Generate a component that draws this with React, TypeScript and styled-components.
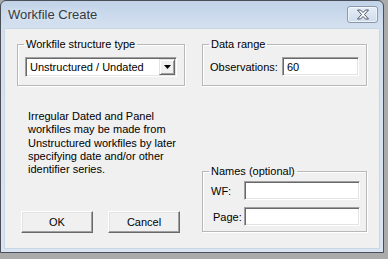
import React from 'react';
import styled, { createGlobalStyle } from 'styled-components';

const GlobalStyle = createGlobalStyle`
  html, body {
    margin: 0;
    padding: 0;
    background: #ababab;
    width: 388px;
    height: 259px;
    overflow: hidden;
  }
`;

const Window = styled.div`
  width: 382px;
  height: 251px;
  border: 1px solid #4a4f57;
  border-radius: 6px 6px 0 0;
  background: linear-gradient(to bottom, #c1d3e8 0px, #d3e0ef 26px, #d9e5f2 100%);
  display: flex;
  flex-direction: column;
  font-family: 'Liberation Sans', Arial, sans-serif;
  font-size: 11px;
  color: #000;
`;

const TitleBar = styled.div`
  height: 27px;
  display: flex;
  align-items: center;
  justify-content: space-between;
  padding: 0 5px 0 7px;
`;

const Title = styled.span`
  font-family: 'Liberation Sans', Arial, sans-serif;
  font-size: 13px;
  color: #333b45;
  text-shadow: 0 0 6px rgba(255, 255, 255, 0.9);
`;

const CloseButton = styled.div`
  width: 29px;
  height: 15px;
  border: 1px solid #8a98ab;
  border-radius: 3px;
  background: linear-gradient(to bottom, #e6edf6, #cfdcec);
  box-shadow: inset 0 0 0 1px rgba(255, 255, 255, 0.6);
  display: flex;
  align-items: center;
  justify-content: center;
`;

const Client = styled.div`
  flex: 1;
  margin: 0 3px 3px 3px;
  background: #f0f0f0;
  border: 1px solid #c9d6e6;
  display: grid;
  grid-template-columns: 168px 165px;
  column-gap: 17px;
  align-items: start;
  padding: 9px 0 0 12px;
`;

const Column = styled.div`
  display: flex;
  flex-direction: column;
`;

const Group = styled.fieldset<{ $height: number; $top?: number; $pad: number }>`
  margin: ${p => p.$top ?? 0}px 0 0 0;
  padding: ${p => p.$pad}px 7px 0 7px;
  border: 1px solid #b8b8b8;
  box-shadow: inset 1px 1px 0 #fff, 1px 1px 0 #fff;
  height: ${p => p.$height}px;
  box-sizing: border-box;
  min-width: 0;
`;

const Legend = styled.legend`
  padding: 0 2px;
  margin-left: -1px;
  line-height: 13px;
`;

const Sunken = styled.div<{ $width: number; $height: number }>`
  width: ${p => p.$width}px;
  height: ${p => p.$height}px;
  box-sizing: border-box;
  background: #fff;
  border-top: 1px solid #a0a0a0;
  border-left: 1px solid #a0a0a0;
  border-right: 1px solid #fff;
  border-bottom: 1px solid #fff;
  box-shadow: inset 1px 1px 0 #696969, inset -1px -1px 0 #e3e3e3;
  display: flex;
  align-items: center;
  padding-left: 4px;
  flex-shrink: 0;
`;

const ComboText = styled.span`
  flex: 1;
`;

const DropButton = styled.div`
  width: 16px;
  height: 16px;
  box-sizing: border-box;
  margin-right: 1px;
  background: #f0f0f0;
  border-top: 1px solid #e3e3e3;
  border-left: 1px solid #e3e3e3;
  border-right: 1px solid #696969;
  border-bottom: 1px solid #696969;
  box-shadow: inset 1px 1px 0 #fff, inset -1px -1px 0 #a0a0a0;
  display: flex;
  align-items: center;
  justify-content: center;
`;

const Row = styled.div<{ $top?: number }>`
  display: flex;
  align-items: center;
  margin-top: ${p => p.$top ?? 0}px;
`;

const Label = styled.span<{ $width: number; $indent?: number }>`
  width: ${p => p.$width}px;
  padding-left: ${p => p.$indent ?? 0}px;
  box-sizing: border-box;
  flex-shrink: 0;
`;

const Note = styled.p`
  margin: 24px 0 0 11px;
  line-height: 13.3px;
`;

const Buttons = styled.div`
  display: flex;
  gap: 15px;
  margin: 35px 0 0 4px;
`;

const Button = styled.div`
  width: 72px;
  height: 22px;
  box-sizing: border-box;
  background: #f0f0f0;
  border-top: 1px solid #fff;
  border-left: 1px solid #fff;
  border-right: 1px solid #696969;
  border-bottom: 1px solid #696969;
  box-shadow: inset -1px -1px 0 #a0a0a0, inset 1px 1px 0 #e3e3e3;
  display: flex;
  align-items: center;
  justify-content: center;
`;

const CloseIcon = () => (
  <svg width="14" height="11" viewBox="0 0 14 11">
    <path
      d="M1.5 1 H4.5 L7 3.5 L9.5 1 H12.5 L8.5 5.5 L12.5 10 H9.5 L7 7.5 L4.5 10 H1.5 L5.5 5.5 Z"
      fill="#fafbfd"
      stroke="#4b5363"
      strokeWidth="1"
      strokeLinejoin="round"
    />
  </svg>
);

const Arrow = () => (
  <svg width="7" height="4" viewBox="0 0 7 4">
    <path d="M0 0 H7 L3.5 4 Z" fill="#000" />
  </svg>
);

const App: React.FC = () => {
  return (
    <>
      <GlobalStyle />
      <Window>
        <TitleBar>
          <Title>Workfile Create</Title>
          <CloseButton>
            <CloseIcon />
          </CloseButton>
        </TitleBar>
        <Client>
          <Column>
            <Group $height={48} $pad={6}>
              <Legend>Workfile structure type</Legend>
              <Sunken $width={152} $height={20}>
                <ComboText>Unstructured / Undated</ComboText>
                <DropButton>
                  <Arrow />
                </DropButton>
              </Sunken>
            </Group>
            <Note>
              Irregular Dated and Panel
              <br />
              workfiles may be made from
              <br />
              Unstructured workfiles by later
              <br />
              specifying date and/or other
              <br />
              identifier series.
            </Note>
            <Buttons>
              <Button>OK</Button>
              <Button>Cancel</Button>
            </Buttons>
          </Column>
          <Column>
            <Group $height={48} $pad={6}>
              <Legend>Data range</Legend>
              <Row>
                <Label $width={72}>Observations:</Label>
                <Sunken $width={77} $height={19}>
                  60
                </Sunken>
              </Row>
            </Group>
            <Group $height={67} $top={79} $pad={3}>
              <Legend>Names (optional)</Legend>
              <Row>
                <Label $width={34} $indent={1}>WF:</Label>
                <Sunken $width={116} $height={19} />
              </Row>
              <Row $top={7}>
                <Label $width={34} $indent={3}>Page:</Label>
                <Sunken $width={116} $height={19} />
              </Row>
            </Group>
          </Column>
        </Client>
      </Window>
    </>
  );
};

export default App;
